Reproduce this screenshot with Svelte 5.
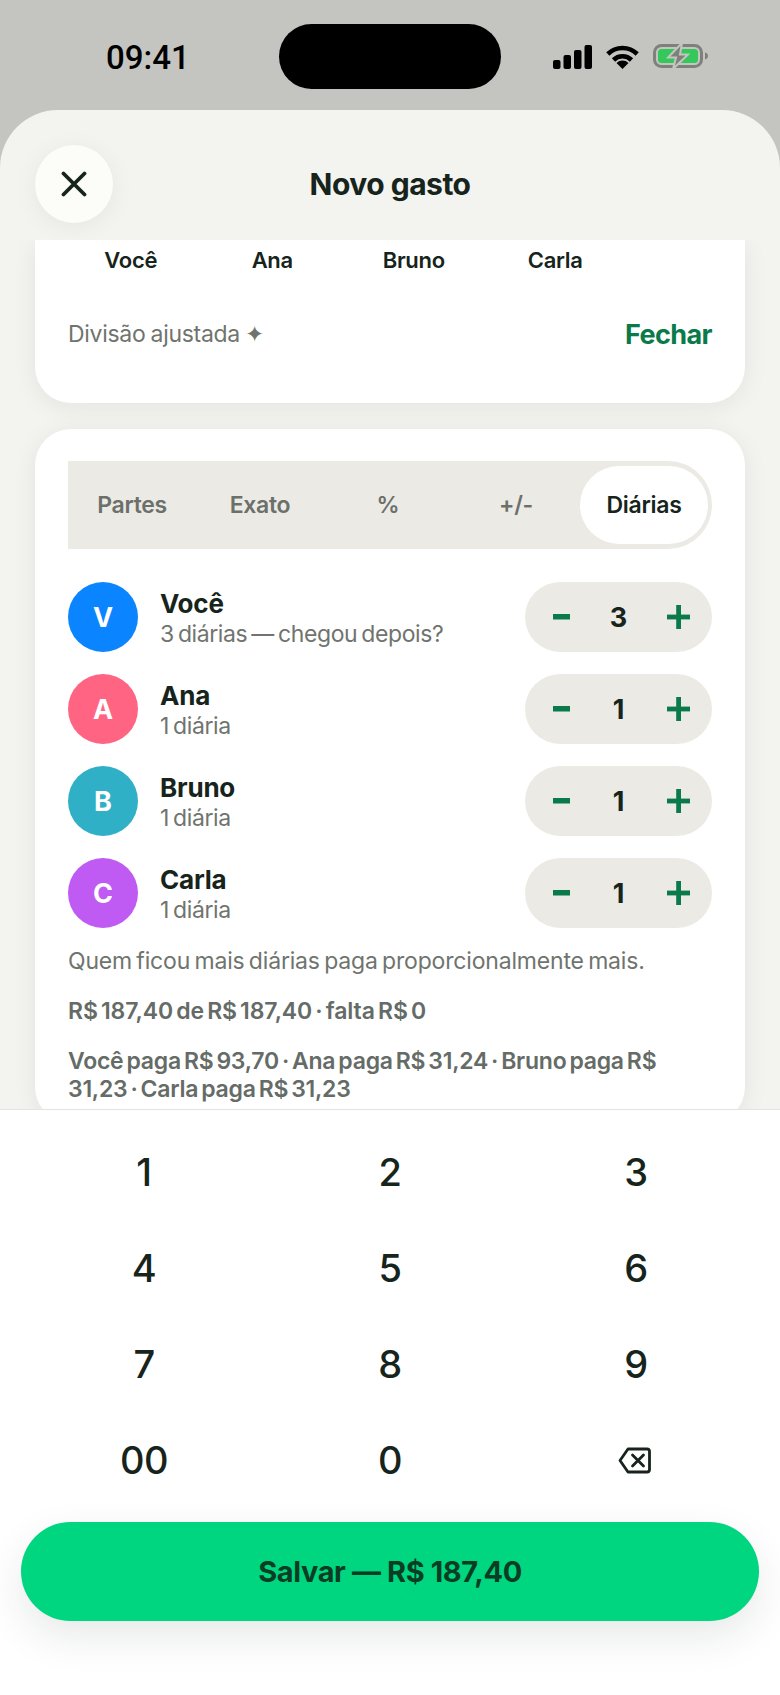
<script>
  const modes = ['Partes', 'Exato', '%', '+/-', 'Diárias'];
  const people = [
    { initial: 'V', name: 'Você', note: '3 diárias — chegou depois?', count: 3, color: '#0a84ff' },
    { initial: 'A', name: 'Ana', note: '1 diária', count: 1, color: '#ff6482' },
    { initial: 'B', name: 'Bruno', note: '1 diária', count: 1, color: '#30b0c7' },
    { initial: 'C', name: 'Carla', note: '1 diária', count: 1, color: '#bf5af2' }
  ];
  const keys = ['1', '2', '3', '4', '5', '6', '7', '8', '9', '00', '0'];
</script>

<div class="screen">
  <div class="status">
    <span class="time">09:41</span>
    <div class="island"></div>
    <div class="status-icons">
      <svg width="39" height="24" viewBox="0 0 39 24">
        <rect x="0" y="15" width="7.5" height="9" rx="2" />
        <rect x="10.5" y="10" width="7.5" height="14" rx="2" />
        <rect x="21" y="5" width="7.5" height="19" rx="2" />
        <rect x="31.5" y="0" width="7.5" height="24" rx="2" />
      </svg>
      <svg width="33" height="24" viewBox="0 0 33 24" fill="none" stroke="#000" stroke-width="4.6">
        <path d="M1.8 9a21 21 0 0 1 29.400 0" />
        <path d="M7.500 15a12.800 12.800 0 0 1 18 0" />
        <path d="M16.500 24l-6-6a8.500 8.500 0 0 1 12 0z" fill="#000" stroke="none" />
      </svg>
      <svg width="55" height="26" viewBox="0 0 55 26">
        <rect x="1.500" y="1.500" width="47" height="21" rx="7" fill="none" stroke="#7f807b" stroke-width="3" />
        <rect x="5" y="5" width="40" height="14" rx="3.500" fill="#34c759" />
        <path d="M52 8.500c2 .6 3 1.900 3 3.500s-1 2.900-3 3.500z" fill="#7f807b" />
        <path d="M29 -1L15 13.500h8L20 25l15-14.500h-8z" fill="#7f807b" stroke="#c4c5c0" stroke-width="2" />
      </svg>
    </div>
  </div>

  <div class="sheet">
    <header class="sheet-head">
      <button class="close" aria-label="Fechar">
        <svg width="26" height="26" viewBox="0 0 26 26" fill="none" stroke="#16241c" stroke-width="3.800" stroke-linecap="round">
          <path d="M2.500 2.500l21 21M23.500 2.500l-21 21" />
        </svg>
      </button>
      <h1>Novo gasto</h1>
    </header>

    <div class="scroll">
      <section class="card top-card">
        <div class="names">
          {#each people as p}
            <span>{p.name}</span>
          {/each}
        </div>
        <div class="adjust">
          <span class="adjust-label">Divisão ajustada ✦</span>
          <span class="adjust-link">Fechar</span>
        </div>
      </section>

      <section class="card split-card">
        <div class="segment">
          {#each modes as m}
            <span class="seg-item" class:active={m === 'Diárias'}>{m}</span>
          {/each}
        </div>

        <div class="rows">
          {#each people as p}
            <div class="row">
              <div class="avatar" style:background={p.color}>{p.initial}</div>
              <div class="who">
                <div class="who-name">{p.name}</div>
                <div class="who-note">{p.note}</div>
              </div>
              <div class="stepper">
                <svg width="17" height="6" viewBox="0 0 17 6"><rect width="17" height="5.500" fill="#0b7a4b" /></svg>
                <span class="count">{p.count}</span>
                <svg width="23" height="24" viewBox="0 0 23 24" fill="#0b7a4b"><rect x="9.200" width="4.800" height="24" /><rect y="9.600" width="23" height="4.800" /></svg>
              </div>
            </div>
          {/each}
        </div>

        <p class="hint">Quem ficou mais diárias paga proporcionalmente mais.</p>
        <p class="total">R$ 187,40 de R$ 187,40 · falta R$ 0</p>
        <p class="total breakdown">Você paga R$ 93,70 · Ana paga R$ 31,24 · Bruno paga R$ 31,23 · Carla paga R$ 31,23</p>
      </section>
    </div>

    <div class="keypad">
      <div class="keys">
        {#each keys as k}
          <span class="key">{k}</span>
        {/each}
        <span class="key">
          <svg class="backspace" width="33" height="27" viewBox="0 0 33 27" fill="none" stroke="#16241c" stroke-width="2.800" stroke-linejoin="round" stroke-linecap="round">
            <path d="M10 2h19a2.500 2.500 0 0 1 2.500 2.500v18a2.500 2.500 0 0 1-2.500 2.500H10L2 13.500z" />
            <path d="M14.500 8l11 11M25.500 8l-11 11" />
          </svg>
        </span>
      </div>
      <button class="save">Salvar — R$ 187,40</button>
    </div>
  </div>
</div>

<style>
  :global(body) {
    margin: 0;
    background: #c4c5c0;
  }

  .screen {
    width: 780px;
    height: 1695px;
    overflow: hidden;
    display: flex;
    flex-direction: column;
    background: #c4c5c0;
    font-family: 'Inter', sans-serif;
    color: #16241c;
  }

  .status {
    height: 110px;
    flex: none;
    display: grid;
    grid-template-columns: 279px 222px 1fr;
    align-items: start;
    padding-top: 24px;
    box-sizing: border-box;
  }

  .time {
    height: 65px;
    line-height: 67px;
    padding-left: 106px;
    font-family: 'Roboto', sans-serif;
    font-size: 33px;
    font-weight: 500;
    color: #000;
  }

  .island {
    height: 65px;
    border-radius: 33px;
    background: #000;
  }

  .status-icons {
    height: 65px;
    display: flex;
    align-items: center;
    gap: 14px;
    padding-left: 52px;
  }

  .sheet {
    flex: 1;
    min-height: 0;
    display: flex;
    flex-direction: column;
    border-radius: 58px 58px 0 0;
    background: #f3f3f0;
    overflow: hidden;
  }

  .sheet-head {
    height: 130px;
    flex: none;
    box-sizing: border-box;
    padding: 35px 35px 17px;
    display: grid;
    grid-template-columns: 78px 1fr 78px;
    align-items: center;
  }

  .close {
    width: 78px;
    height: 78px;
    padding: 0;
    border: 0;
    border-radius: 50%;
    background: #fcfcf8;
    box-shadow: 0 4px 24px rgba(22, 36, 28, 0.06);
    display: flex;
    align-items: center;
    justify-content: center;
  }

  h1 {
    margin: 0;
    text-align: center;
    font-size: 30px;
    font-weight: 700;
    letter-spacing: -0.5px;
  }

  .scroll {
    flex: 1;
    min-height: 0;
    overflow: hidden;
    padding: 0 35px;
    display: flex;
    flex-direction: column;
    gap: 26px;
  }

  .card {
    background: #fff;
    border-radius: 36px;
    box-shadow: 0 4px 24px rgba(22, 36, 28, 0.07);
  }

  .top-card {
    flex: none;
    height: 163px;
    border-radius: 0 0 36px 36px;
    box-sizing: border-box;
    padding: 6px 33px 0;
  }

  .names {
    display: grid;
    grid-template-columns: repeat(4, 141.5px);
    margin-left: -8px;
    font-size: 22px;
    font-weight: 600;
    letter-spacing: -0.3px;
    text-align: center;
    line-height: 28px;
  }

  .adjust {
    margin-top: 43px;
    display: flex;
    justify-content: space-between;
    align-items: center;
    height: 34px;
  }

  .adjust-label {
    font-size: 23px;
    color: #6f746e;
    letter-spacing: -0.3px;
    word-spacing: -1px;
  }

  .adjust-link {
    font-size: 27px;
    font-weight: 700;
    color: #0b7a4b;
    letter-spacing: -0.6px;
  }

  .split-card {
    flex: none;
    padding: 32px 33px 20px;
  }

  .segment {
    height: 88px;
    box-sizing: border-box;
    padding: 5px 4px 5px 0;
    display: grid;
    grid-template-columns: repeat(5, 1fr);
    align-items: stretch;
    background: #ebeae5;
    border-radius: 0 44px 44px 0;
  }

  .seg-item {
    display: flex;
    align-items: center;
    justify-content: center;
    font-size: 23px;
    font-weight: 600;
    letter-spacing: -0.3px;
    color: #6b706b;
    border-radius: 40px;
  }

  .seg-item.active {
    background: #fff;
    color: #16241c;
  }

  .rows {
    margin-top: 33px;
    display: flex;
    flex-direction: column;
    gap: 22px;
  }

  .row {
    height: 70px;
    display: flex;
    align-items: center;
  }

  .avatar {
    width: 70px;
    height: 70px;
    flex: none;
    border-radius: 50%;
    display: flex;
    align-items: center;
    justify-content: center;
    color: #fff;
    font-size: 27px;
    font-weight: 700;
  }

  .who {
    flex: 1;
    margin-left: 22px;
  }

  .who-name {
    font-size: 26px;
    font-weight: 700;
    line-height: 33px;
    letter-spacing: -0.2px;
  }

  .who-note {
    font-size: 23px;
    line-height: 28px;
    color: #6f746e;
    letter-spacing: -0.4px;
    word-spacing: -2px;
  }

  .stepper {
    width: 187px;
    height: 70px;
    box-sizing: border-box;
    padding: 0 22px 0 28px;
    flex: none;
    display: grid;
    grid-template-columns: 17px 1fr 23px;
    align-items: center;
    justify-items: center;
    border-radius: 35px;
    background: #ebeae5;
  }

  .count {
    font-size: 27px;
    font-weight: 700;
  }

  .hint {
    margin: 18px 0 0;
    font-size: 23px;
    line-height: 30px;
    color: #6f746e;
    letter-spacing: -0.17px;
    word-spacing: -2px;
  }

  .total {
    margin: 21px 0 0;
    font-size: 23px;
    line-height: 28px;
    font-weight: 600;
    color: #656b66;
    letter-spacing: -0.1px;
    word-spacing: -2.5px;
  }

  .breakdown {
    margin-top: 22px;
    letter-spacing: -0.25px;
  }

  .keypad {
    flex: none;
    height: 586px;
    box-sizing: border-box;
    border-top: 1px solid #e4e4df;
    background: #fff;
    padding-top: 14px;
    position: relative;
  }

  .keys {
    display: grid;
    grid-template-columns: repeat(3, 246px);
    grid-auto-rows: 96px;
    padding-left: 21px;
  }

  .key {
    display: flex;
    align-items: center;
    justify-content: center;
    font-size: 38px;
    font-weight: 550;
    letter-spacing: -0.5px;
  }

  .backspace {
    margin-right: 3px;
  }

  .save {
    display: block;
    width: 738px;
    height: 99px;
    margin: 14px 21px 0;
    border: 0;
    border-radius: 50px;
    background: #00d67f;
    color: #0a3d24;
    font-family: inherit;
    font-size: 29px;
    font-weight: 700;
    letter-spacing: -0.4px;
    box-shadow: 0 16px 40px rgba(22, 36, 28, 0.1);
  }
</style>
